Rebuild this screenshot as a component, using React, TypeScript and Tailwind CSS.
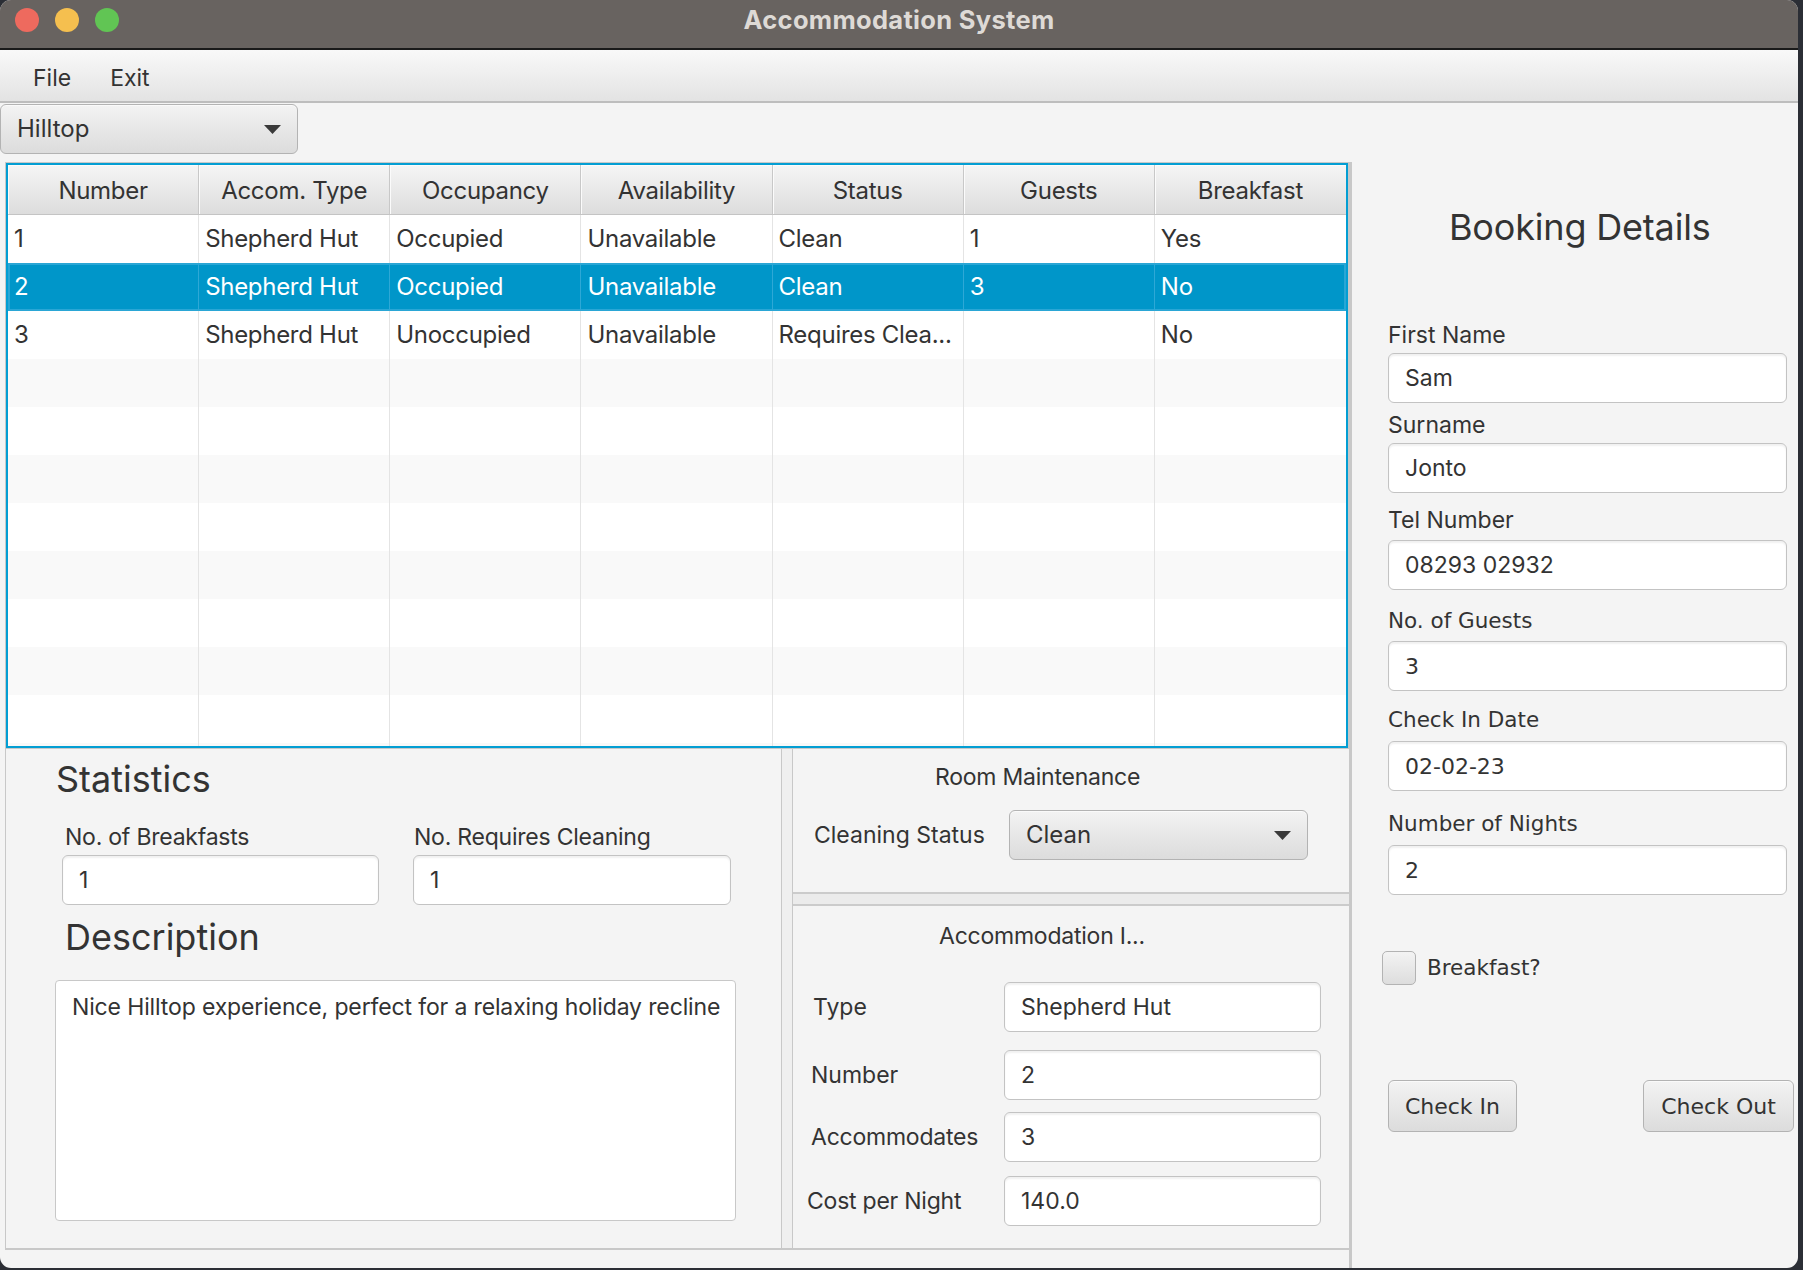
import React from "react";

const headers = ["Number", "Accom. Type", "Occupancy", "Availability", "Status", "Guests", "Breakfast"];
const data = [
  ["1", "Shepherd Hut", "Occupied", "Unavailable", "Clean", "1", "Yes"],
  ["2", "Shepherd Hut", "Occupied", "Unavailable", "Clean", "3", "No"],
  ["3", "Shepherd Hut", "Unoccupied", "Unavailable", "Requires Clea...", "", "No"],
];

function Arrow() {
  return (
    <svg width="17" height="9" viewBox="0 0 17 9">
      <polygon points="0,0 17,0 8.5,9" fill="#3a3a3a" />
    </svg>
  );
}

function TextField({ value, className = "" }: { value: string; className?: string }) {
  return (
    <div
      className={
        "h-[50px] bg-white border border-[#c3c3c3] rounded-[6px] shadow-[inset_0_2px_2px_rgba(0,0,0,0.06)] flex items-center pl-[16px] text-[23px] text-[#333333] " +
        className
      }
    >
      {value}
    </div>
  );
}

function Table() {
  const rows = [];
  for (let i = 0; i < 12; i++) {
    const r = data[i];
    const selected = i === 1;
    const bg = selected ? "bg-[#0096c9] text-white shadow-[inset_0_0_0_2px_#2aa6d5]" : i % 2 === 1 ? "bg-[#f9f9f9]" : "bg-white";
    rows.push(
      <div key={i} className={"grid grid-cols-7 h-[48px] shrink-0 " + bg}>
        {headers.map((_, c) => (
          <div
            key={c}
            className={
              "flex items-center pl-[6px] text-[24px] tracking-[-0.012em] whitespace-nowrap overflow-hidden " +
              (c < 6 ? (selected ? "border-r border-[#2ea8d6]" : "border-r border-[#e4e4e4]") : "")
            }
          >
            {r ? r[c] : ""}
          </div>
        ))}
      </div>
    );
  }
  return (
    <div className="h-[587px] border border-[#c8c8c8] shrink-0">
      <div className="h-full border-2 border-[#039ed3] flex flex-col">
        <div className="grid grid-cols-7 h-[50px] shrink-0 border-b border-[#c4c4c4]">
          {headers.map((h, c) => (
            <div
              key={h}
              className={
                "flex items-center justify-center pt-[2px] text-[24px] tracking-[-0.012em] bg-gradient-to-b from-[#f5f5f5] to-[#dddddd] shadow-[inset_1px_1px_0_#fbfbfb] " +
                (c < 6 ? "border-r border-[#c8c8c8]" : "")
              }
            >
              {h}
            </div>
          ))}
        </div>
        <div className="flex-1 overflow-hidden flex flex-col">{rows}</div>
      </div>
    </div>
  );
}

function Combo({ value, className = "" }: { value: string; className?: string }) {
  return (
    <div
      className={
        "h-[50px] rounded-[6px] border border-[#b3b3b3] bg-gradient-to-b from-[#f3f3f3] to-[#dcdcdc] shadow-[inset_0_1px_0_#fafafa] flex items-center justify-between pl-[16px] pr-[16px] text-[24px] text-[#333333] " +
        className
      }
    >
      <span>{value}</span>
      <Arrow />
    </div>
  );
}

function Button({ label, className = "" }: { label: string; className?: string }) {
  return (
    <div
      className={
        "h-[52px] rounded-[6px] border border-[#b3b3b3] bg-gradient-to-b from-[#f3f3f3] to-[#dcdcdc] shadow-[inset_0_1px_0_#fafafa] flex items-center justify-center text-[22px] font-['DejaVu_Sans',sans-serif] text-[#333333] " +
        className
      }
    >
      {label}
    </div>
  );
}

export default function App() {
  return (
    <div className="w-[1803px] h-[1270px] bg-[#2b2e35] overflow-hidden font-['Inter',sans-serif] text-[#333333]">
      <div className="w-[1798px] h-[1268px] rounded-[11px] overflow-hidden bg-[#f4f4f4] flex flex-col">
        {/* Title bar */}
        <div className="h-[50px] shrink-0 bg-[#686360] border-b-2 border-[#1a1a1a] relative flex items-center justify-center pb-[7px]">
          <div className="absolute left-[15px] top-[8px] flex gap-[16px]">
            <div className="w-[24px] h-[24px] rounded-full bg-[#ee6a5e]" />
            <div className="w-[24px] h-[24px] rounded-full bg-[#f5bf4f]" />
            <div className="w-[24px] h-[24px] rounded-full bg-[#61c554]" />
          </div>
          <span className="text-[25.5px] font-bold text-[#dedad6] tracking-[0.012em]">Accommodation System</span>
        </div>

        {/* Menu bar */}
        <div className="h-[53px] shrink-0 bg-gradient-to-b from-[#f9f9f9] to-[#e3e3e3] border-b-2 border-[#bdbdbd] flex items-center pl-[33px] pt-[5px] gap-[39px] text-[23px]">
          <span>File</span>
          <span>Exit</span>
        </div>

        {/* Combo row */}
        <div className="h-[59px] shrink-0 pt-[1px]">
          <Combo value="Hilltop" className="w-[298px]" />
        </div>

        {/* Main */}
        <div className="flex-1 flex min-h-0">
          {/* Left column */}
          <div className="w-[1349px] shrink-0 pl-[5px] flex flex-col">
            <Table />
            <div className="h-[501px] shrink-0 flex border-b-2 border-[#c8c8c8]">
              {/* Statistics */}
              <div className="w-[776px] shrink-0 border-l border-[#c8c8c8] flex flex-col">
                <div className="mt-[8px] ml-[50px] text-[36px] leading-[44px]">Statistics</div>
                <div className="mt-[22px] ml-[56px] grid grid-cols-[317px_318px] gap-x-[34px]">
                  <div className="text-[23px] leading-[28px] pl-[3px] whitespace-nowrap tracking-[-0.01em]">No. of Breakfasts</div>
                  <div className="text-[23px] leading-[28px] pl-[1px] whitespace-nowrap tracking-[-0.01em]">No. Requires Cleaning</div>
                  <TextField value="1" className="mt-[4px]" />
                  <TextField value="1" className="mt-[4px]" />
                </div>
                <div className="mt-[10px] ml-[59px] text-[36px] leading-[44px]">Description</div>
                <div className="mt-[21px] ml-[49px] w-[681px] h-[241px] bg-white border border-[#c8c8c8] rounded-[4px] pl-[16px] pt-[12px] text-[23px] leading-[28px] whitespace-nowrap tracking-[-0.006em]">
                  Nice Hilltop experience, perfect for a relaxing holiday recline
                </div>
              </div>

              {/* Divider */}
              <div className="w-[12px] shrink-0 border-l border-r border-[#c8c8c8] bg-[#efefef]" />

              {/* Right stack */}
              <div className="flex-1 flex flex-col">
                <div className="h-[143px] shrink-0 flex flex-col">
                  <div className="mt-[14px] ml-[142px] text-[23px] leading-[28px] tracking-[-0.01em]">Room Maintenance</div>
                  <div className="mt-[19px] flex items-center">
                    <div className="w-[216px] pl-[21px] text-[23px] whitespace-nowrap">Cleaning Status</div>
                    <Combo value="Clean" className="w-[299px]" />
                  </div>
                </div>
                <div className="h-[14px] shrink-0 border-t-2 border-b-2 border-[#cbcbcb] bg-[#ebebeb]" />
                <div className="flex-1 flex flex-col">
                  <div className="mt-[16px] ml-[146px] text-[23px] leading-[28px] tracking-[-0.01em]">Accommodation I...</div>
                  <div className="mt-[32px] flex items-center">
                    <div className="w-[211px] pl-[20px] text-[23px]">Type</div>
                    <TextField value="Shepherd Hut" className="w-[317px]" />
                  </div>
                  <div className="mt-[18px] flex items-center">
                    <div className="w-[211px] pl-[18px] text-[23px]">Number</div>
                    <TextField value="2" className="w-[317px]" />
                  </div>
                  <div className="mt-[12px] flex items-center">
                    <div className="w-[211px] pl-[18px] text-[23px] tracking-[-0.01em]">Accommodates</div>
                    <TextField value="3" className="w-[317px]" />
                  </div>
                  <div className="mt-[14px] flex items-center">
                    <div className="w-[211px] pl-[14px] text-[23px] whitespace-nowrap tracking-[-0.01em]">Cost per Night</div>
                    <TextField value="140.0" className="w-[317px]" />
                  </div>
                </div>
              </div>
            </div>
          </div>

          {/* Right panel */}
          <div className="flex-1 border-l-[3px] border-[#c8c8c8] pl-[36px] pr-[11px] flex flex-col">
            <div className="mt-[43px] ml-[61px] text-[36px] leading-[44px] whitespace-nowrap tracking-[-0.005em]">Booking Details</div>
            <div className="mt-[72px] text-[23px] leading-[28px]">First Name</div>
            <TextField value="Sam" className="mt-[4px]" />
            <div className="mt-[8px] text-[23px] leading-[28px]">Surname</div>
            <TextField value="Jonto" className="mt-[4px]" />
            <div className="mt-[13px] text-[23px] leading-[28px]">Tel Number</div>
            <TextField value="08293 02932" className="mt-[6px]" />
            <div className="mt-[18px] text-[21.5px] leading-[26px] font-['DejaVu_Sans',sans-serif]">No. of Guests</div>
            <TextField value="3" className="mt-[7px] font-['DejaVu_Sans',sans-serif] !text-[22px]" />
            <div className="mt-[16px] text-[21.5px] leading-[26px] font-['DejaVu_Sans',sans-serif]">Check In Date</div>
            <TextField value="02-02-23" className="mt-[8px] font-['DejaVu_Sans',sans-serif] !text-[22px]" />
            <div className="mt-[20px] text-[21.5px] leading-[26px] font-['DejaVu_Sans',sans-serif]">Number of Nights</div>
            <TextField value="2" className="mt-[8px] font-['DejaVu_Sans',sans-serif] !text-[22px]" />
            <div className="mt-[56px] -ml-[6px] flex items-center gap-[11px]">
              <div className="w-[34px] h-[34px] rounded-[5px] border border-[#b3b3b3] bg-gradient-to-b from-[#f3f3f3] to-[#dddddd]" />
              <span className="text-[21.5px] font-['DejaVu_Sans',sans-serif]">Breakfast?</span>
            </div>
            <div className="mt-[95px] -mr-[7px] flex justify-between">
              <Button label="Check In" className="w-[129px]" />
              <Button label="Check Out" className="w-[151px]" />
            </div>
          </div>
        </div>
      </div>
    </div>
  );
}
